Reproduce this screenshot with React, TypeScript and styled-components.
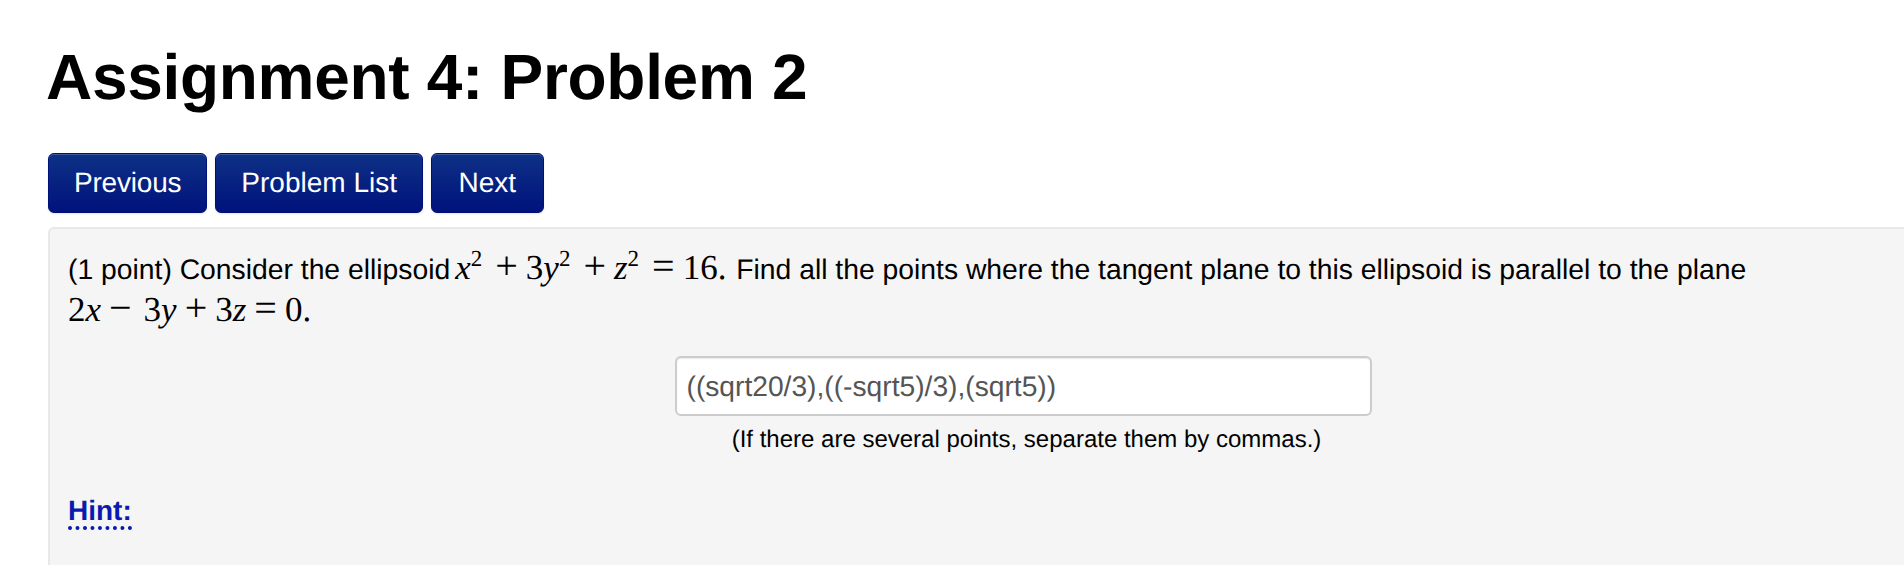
import React from "react";
import styled, { createGlobalStyle } from "styled-components";

const Global = createGlobalStyle`
  html, body { margin: 0; padding: 0; background: #fff; }
  body {
    font-family: "Liberation Sans", Arial, sans-serif;
    color: #000;
    text-rendering: geometricPrecision;
  }
`;

const Page = styled.div`
  width: 1904px;
  height: 565px;
  overflow: hidden;
  padding: 43px 0 0 48px;
  box-sizing: border-box;
`;

const Title = styled.h1`
  margin: 0 0 0 -2px;
  font-size: 64px;
  line-height: 68px;
  font-weight: 700;
  letter-spacing: -0.3px;
`;

const Nav = styled.nav`
  display: flex;
  gap: 8px;
  margin-top: 42px;
`;

const NavButton = styled.a<{ $pad?: number; $track?: number }>`
  display: flex;
  align-items: center;
  height: 60px;
  box-sizing: border-box;
  padding: 0 ${(p) => p.$pad ?? 25}px;
  border-radius: 6px;
  border: 1px solid #00107a;
  background: linear-gradient(#0e3186, #00127c);
  box-shadow: inset 0 1px 0 rgba(255,255,255,.2), 0 1px 2px rgba(0,0,0,.1);
  color: #fff;
  font-size: 28px;
  letter-spacing: ${(p) => p.$track ?? 0}px;
`;

const Panel = styled.section`
  margin-top: 14px;
  margin-right: -94px;
  height: 400px;
  padding: 19px 18px;
  box-sizing: border-box;
  background: #f5f5f5;
  border: 2px solid #e8e8e8;
  border-radius: 6px;
`;

const Problem = styled.p`
  margin: 0;
  font-size: 28.3px;
  line-height: 42px;
  width: 1740px;
`;

const Formula = styled.span<{ $inline?: boolean }>`
  font-family: "Liberation Serif", "Times New Roman", serif;
  font-size: 35px;
  line-height: 0;
  margin: 0 ${(p) => (p.$inline ? 2 : 0)}px 0 ${(p) => (p.$inline ? 5 : 0)}px;
`;

const V = styled.i``;

const Sup = styled.sup`
  font-size: 23px;
  line-height: 0;
  vertical-align: 13px;
  margin-right: 5px;
`;

const Op = styled.span<{ $after?: number }>`
  font-size: 40px;
  margin: 0 ${(p) => 8 + (p.$after ?? 0)}px 0 8px;
`;

const AnswerBlock = styled.div`
  display: flex;
  flex-direction: column;
  align-items: center;
  margin-top: 24px;
`;

const Answer = styled.input`
  width: 697px;
  height: 60px;
  box-sizing: border-box;
  padding: 0 10px;
  border: 2px solid #ccc;
  border-radius: 6px;
  background: #fff;
  box-shadow: inset 0 1px 1px rgba(0,0,0,.08);
  color: #555;
  font: 28.2px "Liberation Sans", Arial, sans-serif;
  text-rendering: geometricPrecision;
`;

const Note = styled.div`
  margin: 8px 0 0 7px;
  font-size: 24px;
  line-height: 32px;
`;

const Hint = styled.span`
  display: inline-block;
  margin-top: 40px;
  color: #0a1ab0;
  font-size: 28px;
  font-weight: 700;
  line-height: 30px;
  border-bottom: 4px dotted #0a1ab0;
`;

export default function App() {
  return (
    <Page>
      <Global />
      <Title>Assignment 4: Problem 2</Title>
      <Nav>
        <NavButton $track={-0.2}>Previous</NavButton>
        <NavButton>Problem List</NavButton>
        <NavButton $pad={26.5}>Next</NavButton>
      </Nav>
      <Panel>
        <Problem>
          (1 point) Consider the ellipsoid
          <Formula $inline>
            <V>x</V><Sup>2</Sup><Op>+</Op>3<V>y</V><Sup>2</Sup><Op>+</Op><V>z</V><Sup>2</Sup><Op>=</Op>16.
          </Formula>
          {" "}Find all the points where the tangent plane to this ellipsoid is parallel to the plane{" "}
          <Formula>
            2<V>x</V><Op $after={4}>−</Op>3<V>y</V><Op>+</Op>3<V>z</V><Op>=</Op>0.
          </Formula>
        </Problem>
        <AnswerBlock>
          <Answer readOnly value="((sqrt20/3),((-sqrt5)/3),(sqrt5))" />
          <Note>(If there are several points, separate them by commas.)</Note>
        </AnswerBlock>
        <Hint>Hint:</Hint>
      </Panel>
    </Page>
  );
}
